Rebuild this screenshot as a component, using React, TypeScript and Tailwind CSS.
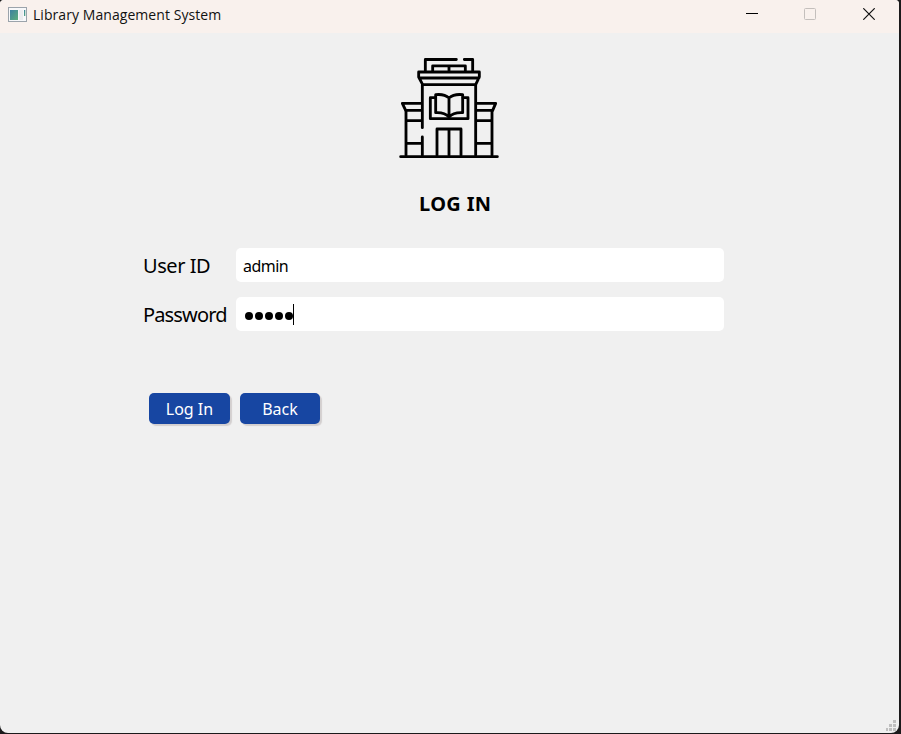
function LibraryIcon() {
  return (
    <svg
      className="h-[120px] w-[120px] shrink-0"
      viewBox="0 0 360 360"
      fill="none"
      stroke="#000"
      strokeWidth="8.5"
      strokeLinecap="round"
      strokeLinejoin="round"
    >
      <path d="M106 62V28.5H199M223 28.5H248V62" />
      <path d="M128 62V47.500H226V62M177 48V62" />
      <path d="M86 66H268V81L257 104H98L86 81ZM88 84H267" />
      <path d="M97 105V233M97 261V316M257 105V316" />
      <path d="M94 160H37L47 181H94M260 160H317L308 181H260" />
      <path d="M48 183V316M306 183V316M50 212H94M50 280H94M260 212H304M260 280H304" />
      <path d="M32 320H322" />
      <path d="M141 316V237H213V316M177 239V316" />
      <path d="M137 143H121V206H234V143H219" />
      <path d="M177 144C167 135 154 132 137 134V188C154 187 168 191 177 201C186 191 200 187 218 188V134C201 132 187 135 177 144V199" />
    </svg>
  );
}

function AppIcon() {
  return (
    <svg className="h-[15px] w-[19px] shrink-0" viewBox="0 0 19 15">
      <defs>
        <linearGradient id="pane" x1="0" y1="0" x2="1" y2="1">
          <stop offset="0" stopColor="#3c80a0" />
          <stop offset="1" stopColor="#5cae7c" />
        </linearGradient>
      </defs>
      <rect x=".5" y=".5" width="18" height="14" fill="#f7f8fa" stroke="#9ba3ab" />
      <rect x="2" y="3" width="8" height="10" fill="url(#pane)" />
      <rect x="11" y="3" width="4" height="10" fill="#ececef" />
      <rect x="16" y="3" width="1.3" height="6" fill="url(#pane)" />
    </svg>
  );
}

function TitleBar() {
  return (
    <header className="flex h-[33px] items-start bg-[#f9f1ed] pl-2">
      <div className="flex h-[29px] items-center gap-[6px]">
        <AppIcon />
        <span className="font-['Open_Sans',sans-serif] text-[14px] leading-5 tracking-[0.06px] whitespace-nowrap text-[#111]">
          Library Management System
        </span>
      </div>
      <div className="mr-6 ml-auto flex h-7 items-center">
        <svg className="mr-[46px] h-3 w-3" viewBox="0 0 12 12">
          <path d="M0 5.5H12" stroke="#000" />
        </svg>
        <svg className="mr-[47px] h-3 w-3" viewBox="0 0 12 12">
          <rect x=".5" y=".5" width="11" height="11" rx="1" fill="none" stroke="#c4bfbc" />
        </svg>
        <svg className="h-3 w-3" viewBox="0 0 12 12">
          <path d="M.3 .3L11.7 11.7M11.7 .3L.3 11.7" stroke="#111" strokeWidth="1.2" />
        </svg>
      </div>
    </header>
  );
}

const label = "w-[93px] pt-px text-[20px] leading-[34px] whitespace-nowrap";
const field = "flex h-[34px] w-[488px] items-center rounded-[5px] bg-white text-[16px]";
const button =
  "h-[31px] rounded-[5px] bg-[#1746a2] pt-px text-[16px] leading-[30px] text-white shadow-[2px_2px_1px_#d3cfcf]";

export default function App() {
  return (
    <div className="h-[734px] w-[901px] overflow-hidden bg-[#1b1a1b]">
      <div className="flex h-[733px] w-[899px] flex-col overflow-hidden rounded-t-[4px] rounded-b-[8px] bg-[#f0f0f0] font-['Noto_Sans',sans-serif] text-black">
        <TitleBar />
        <main className="flex flex-1 flex-col">
          <div className="mt-[17px] ml-[390px]">
            <LibraryIcon />
          </div>
          <h1 className="mt-[20px] ml-[419px] text-[20px] leading-[28px] font-bold tracking-[0.35px]">LOG IN</h1>
          <form className="mt-[30px] ml-[143px] flex flex-col">
            <div className="flex h-[34px]">
              <label className={`${label} tracking-[-0.45px]`}>User ID</label>
              <div className={`${field} pt-[2px] pl-[7px] tracking-[-0.55px]`}>admin</div>
            </div>
            <div className="mt-[15px] flex h-[34px]">
              <label className={`${label} tracking-[-0.85px]`}>Password</label>
              <div className={`${field} pl-[8.500px]`}>
                <div className="mt-[4px] flex gap-[2px]">
                  {[0, 1, 2, 3, 4].map((i) => (
                    <i key={i} className="h-2 w-2 rounded-full bg-black" />
                  ))}
                </div>
                <i className="ml-[0.5px] h-[21px] w-px bg-black" />
              </div>
            </div>
            <div className="mt-[62px] ml-[6px] flex gap-[10px]">
              <button type="button" className={`${button} w-[81px]`}>
                Log In
              </button>
              <button type="button" className={`${button} w-[80px]`}>
                Back
              </button>
            </div>
          </form>
          <svg className="mt-auto mr-[3px] mb-[2px] ml-auto h-[11px] w-[10px]" viewBox="0 0 10 11" fill="#bfbfbf">
            <path d="M7 0h3v3h-3zM3 4h3v3h-3zM7 4h3v3h-3zM0 8h2v3h-2zM3 8h3v3h-3zM7 8h3v3h-3z" />
          </svg>
        </main>
      </div>
    </div>
  );
}
